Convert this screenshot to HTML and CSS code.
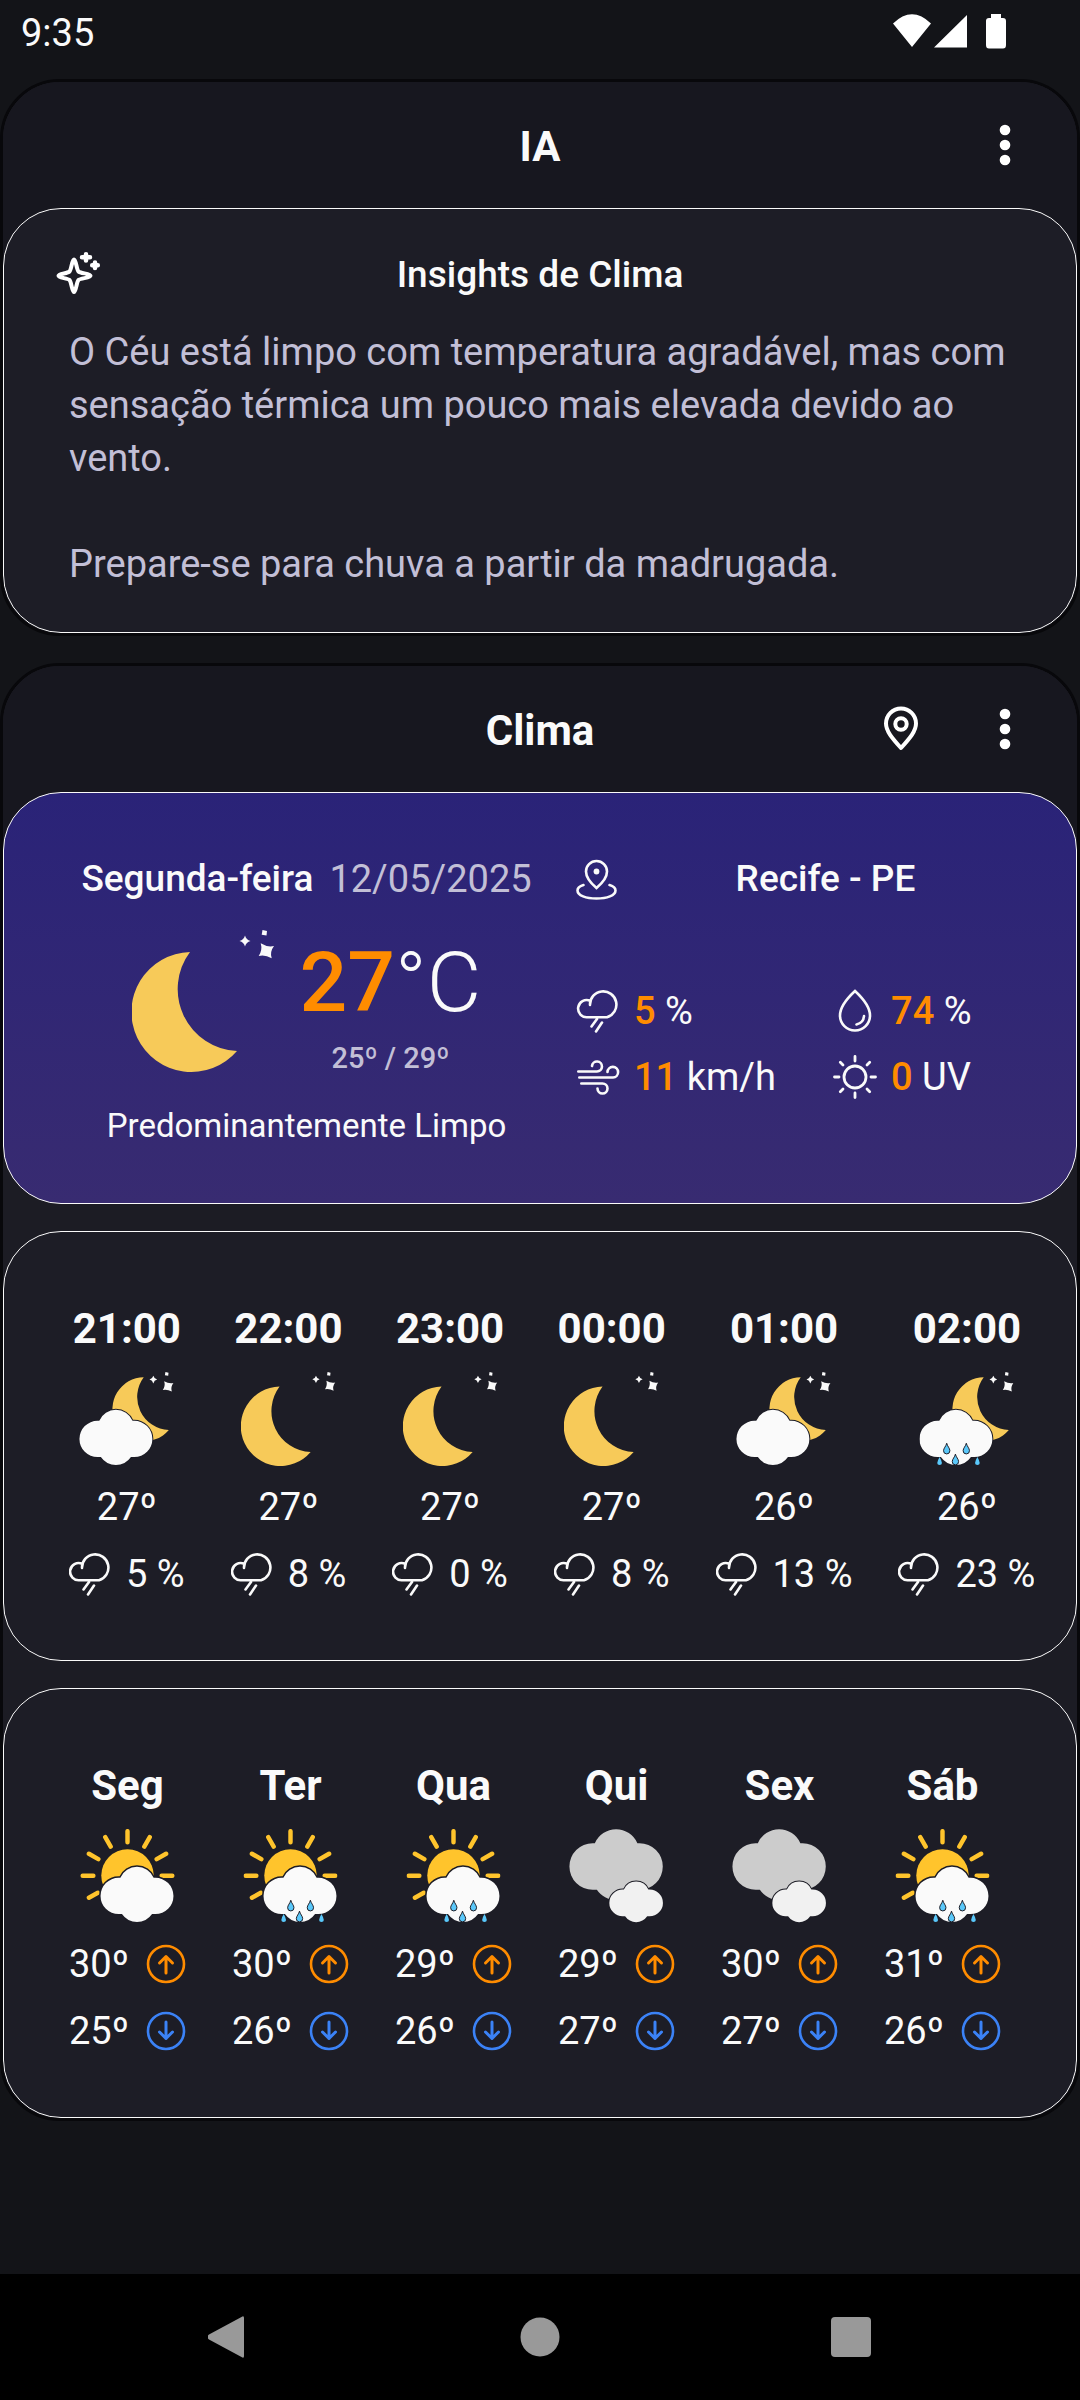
FILE: index.html
```html
<!DOCTYPE html>
<html lang="pt-BR">
<head>
<meta charset="utf-8">
<meta name="viewport" content="width=device-width, initial-scale=1">
<title>Clima</title>
<link rel="stylesheet" href="styles.css">
</head>
<body>
<svg class="sprite" aria-hidden="true">
  <defs>
    <path id="cloud-shape" d="M18.3 49.3H20A18.3 18.3 0 0 1 53.6 49.3H55.3A18.3 18.3 0 0 1 55.3 86H52A18.3 18.3 0 0 1 21.6 86H18.3A18.3 18.3 0 0 1 18.3 49.3Z"/>
    <path id="moon-shape" d="M58 22A60 60 0 1 0 105 121A62 62 0 0 1 58 22Z"/>
    <g id="stars-shape">
      <path d="M128.700 13.300Q135.500 17.500 142 16Q137.500 22 139.700 28.200Q133 24.500 126.700 26Q130.700 20 128.700 13.300Z"/>
      <path d="M113 5.500Q114.200 9.800 118.500 11Q114.200 12.200 113 16.500Q111.800 12.200 107.500 11Q111.800 9.800 113 5.500Z"/>
      <path d="M130.500 0L135 1L134.500 5.500L129.700 4.800Z"/>
    </g>
    <path id="drop-shape" d="M0 0C.6 3 3.200 5 3.200 7.600A3.200 3.200 0 0 1 -3.200 7.600C-3.200 5 -.6 3 0 0Z"/>
    <g id="rain-shape">
      <g stroke="#1d1d26" stroke-width="1">
        <use href="#drop-shape" x="27.500" y="72"/>
        <use href="#drop-shape" x="47.300" y="72"/>
        <use href="#drop-shape" x="36.300" y="83"/>
      </g>
      <path d="M20.300 86Q25 94 20.300 94Q15.600 94 20.300 86ZM58.500 86Q63.200 94 58.500 94Q53.800 94 58.500 86Z"/>
    </g>
  </defs>
  <symbol id="moon" viewBox="0 0 143 142">
    <use href="#moon-shape" fill="#f7ca59"/>
    <use href="#stars-shape" fill="#fafafa"/>
  </symbol>
  <symbol id="moon-cloud" viewBox="0 0 95 95">
    <use href="#moon-shape" fill="#f7ca59" transform="translate(33.600 -6.700) scale(.54)"/>
    <use href="#stars-shape" fill="#fafafa" transform="translate(-4.500 0) scale(.7)"/>
    <use href="#cloud-shape" fill="#fafafa" stroke="#1d1d26" stroke-width="2" paint-order="stroke"/>
  </symbol>
  <symbol id="moon-rain" viewBox="0 0 95 95">
    <use href="#moon-cloud" width="95" height="95"/>
    <use href="#rain-shape" fill="#5ac8fa"/>
  </symbol>
  <symbol id="sun-cloud" viewBox="0 0 95 95">
    <circle cx="47.500" cy="47" r="26.500" fill="#ffc42c"/>
    <path d="M47.500 2.200V13.500M70 8.200L64.500 17.800M86.500 25L77 30.500M92.800 47.300H82M2.200 47.300H13M8.500 25L18 30.500M25 8.200L30.500 17.800M8.500 69.500L17.500 64.500" stroke="#ffc42c" stroke-width="4.500" stroke-linecap="round"/>
    <use href="#cloud-shape" x="20.300" fill="#fafafa" stroke="#1d1d26" stroke-width="3" paint-order="stroke"/>
  </symbol>
  <symbol id="sun-rain" viewBox="0 0 95 95">
    <use href="#sun-cloud" width="95" height="95"/>
    <use href="#rain-shape" x="20.300" fill="#5ac8fa"/>
  </symbol>
  <symbol id="overcast" viewBox="0 0 95 95">
    <use href="#cloud-shape" fill="#ccc" transform="translate(0 -48.700) scale(1.280)"/>
    <use href="#cloud-shape" fill="#f1f1f1" stroke="#1d1d26" stroke-width="3" paint-order="stroke" transform="translate(40.300 25) scale(.735)"/>
  </symbol>
  <symbol id="rain" viewBox="0 0 42 44">
    <path d="M13 16A13.200 13.200 0 1 1 30 28.200H10.500A8.600 8.600 0 1 1 13 11.700M20 30L14.500 37.500M25 33.500L19 42.500" fill="none" stroke="#fafafa" stroke-width="2.600" stroke-linecap="round"/>
  </symbol>
  <symbol id="up" viewBox="0 0 40 40">
    <path d="M20 29V12.500M13.500 19L20 12.500L26.500 19" fill="none" stroke="currentColor" stroke-width="3" stroke-linecap="round" stroke-linejoin="round"/>
    <circle cx="20" cy="20" r="18" fill="none" stroke="currentColor" stroke-width="2.600"/>
  </symbol>
  <symbol id="dots" viewBox="0 0 12 42">
    <g fill="#fff"><circle cx="6" cy="6" r="5.300"/><circle cx="6" cy="21" r="5.300"/><circle cx="6" cy="36" r="5.300"/></g>
  </symbol>
</svg>

<div class="status-bar">
  <span>9:35</span>
  <span class="status-icons">
    <svg width="113" height="36" viewBox="0 0 113 36"><path d="M0 9.500Q19 -9 38 9.500L19 33Z M74 1V33.500H41Z M94 4H98V0H108V4H110Q113 4 113 7V31Q113 34.500 110 34.500H96Q93 34.500 93 31V7Q93 4 96 4Z" fill="#fff"/></svg>
  </span>
</div>

<main class="content">
  <section class="panel">
    <header class="panel-head">
      <h1 class="heading">IA</h1>
      <div class="actions">
        <button class="icon-button" aria-label="Mais opções"><svg width="12" height="42"><use href="#dots"/></svg></button>
      </div>
    </header>
    <article class="card insights">
      <div class="insights-head">
        <svg width="46" height="46" viewBox="0 2 46 46" fill="none"><path d="M18 9.500C20 9.500 20.500 19.500 22.500 21.500S34.500 23.500 34.500 25.800S24.500 28 22.500 30S20 42 18 42S15.500 32 13.500 30S2.500 28 2.500 25.800S11.500 23.500 13.500 21.500S16 9.500 18 9.500Z" stroke="#fff" stroke-width="4" stroke-linejoin="round"/><path d="M30 4.300V10.500M26 7.300H34M39 12.500V18M36.200 15.200H41.800" stroke="#fff" stroke-width="4.500" stroke-linecap="round"/></svg>
        <h2 class="label">Insights de Clima</h2>
      </div>
      <div class="insights-text">
        <p>O Céu está limpo com temperatura agradável, mas com<br>sensação térmica um pouco mais elevada devido ao<br>vento.</p>
        <p>Prepare-se para chuva a partir da madrugada.</p>
      </div>
    </article>
  </section>

  <section class="panel">
    <header class="panel-head">
      <h1 class="heading">Clima</h1>
      <div class="actions">
        <button class="icon-button" aria-label="Localização"><svg width="36" height="46" viewBox="0 0 36 46" fill="none" stroke="#fff" stroke-width="4"><path d="M18 42C9 32 3 25 3 17.500A15 15 0 0 1 33 17.500C33 25 27 32 18 42Z" stroke-linejoin="round"/><circle cx="18" cy="18" r="5.700"/></svg></button>
        <button class="icon-button" aria-label="Mais opções"><svg width="12" height="42"><use href="#dots"/></svg></button>
      </div>
    </header>

    <div class="cards">
      <article class="card current">
        <div class="today">
          <p class="date"><span class="label">Segunda-feira</span> <time class="muted" datetime="2025-05-12">12/05/2025</time></p>
          <div class="now">
            <svg width="143" height="142"><use href="#moon"/></svg>
            <div class="now-temp">
              <p class="degrees"><span class="hot">27</span>°C</p>
              <p class="range">25º / 29º</p>
            </div>
          </div>
          <p class="condition">Predominantemente Limpo</p>
        </div>
        <div class="details">
          <div class="place">
            <svg width="42" height="42" viewBox="0 -2 42 42" fill="none" stroke="#fafafa" stroke-width="2.600" stroke-linecap="round"><path d="M20.500 28C14 22.500 10 17 10 11.500A10.500 10.500 0 0 1 31 11.500C31 17 27 22.500 20.500 28Z"/><circle cx="20.500" cy="11.500" r="2.900" fill="#fafafa" stroke="none"/><path d="M7.500 25C4 26 1.500 28 1.500 30.500C1.500 35.500 10 38.500 20.500 38.500S39.500 35.500 39.500 30.500C39.500 28 37 26 33.500 25"/></svg>
            <h2 class="label">Recife - PE</h2>
          </div>
          <ul class="stats">
            <li><svg width="44" height="44"><use href="#rain"/></svg><span><b class="hot">5</b> %</span></li>
            <li><svg width="44" height="44" viewBox="0 0 44 44" fill="none" stroke="#fafafa" stroke-width="2.600" stroke-linecap="round"><path d="M22 2C15 8.500 7 17 7 26.500A15 15 0 0 0 37 26.500C37 17 29 8.500 22 2Z"/><path d="M31 27Q30.500 34 23.500 35.500"/></svg><span><b class="hot">74</b> %</span></li>
            <li><svg width="44" height="44" viewBox="0 0 44 44" fill="none" stroke="#fafafa" stroke-width="2.600" stroke-linecap="round"><path d="M2.300 16.500H21A5 5 0 1 0 16 11M3.300 22.500H37A5.300 5.300 0 1 0 31.500 17M5.300 28.500H26.500A5 5 0 1 1 21.500 33.500"/></svg><span><b class="hot">11</b> km/h</span></li>
            <li><svg width="44" height="44" viewBox="0 0 44 44" fill="none" stroke="#fafafa" stroke-width="2.800" stroke-linecap="round"><circle cx="22" cy="22" r="11"/><path d="M22 1.500V6M22 38V42.500M1.500 22H6M38 22H42.500M7.300 7.300L10 10M34 34L36.700 36.700M7.300 36.700L10 34M34 10L36.700 7.300"/></svg><span><b class="hot">0</b> UV</span></li>
          </ul>
        </div>
      </article>

      <article class="card forecast">
        <ul class="hours">
          <li class="slot"><h3 class="heading">21:00</h3><svg width="95" height="94"><use href="#moon-cloud"/></svg><p>27º</p><p class="rain"><svg width="42" height="44"><use href="#rain"/></svg>5 %</p></li>
          <li class="slot"><h3 class="heading">22:00</h3><svg width="95" height="94"><use href="#moon"/></svg><p>27º</p><p class="rain"><svg width="42" height="44"><use href="#rain"/></svg>8 %</p></li>
          <li class="slot"><h3 class="heading">23:00</h3><svg width="95" height="94"><use href="#moon"/></svg><p>27º</p><p class="rain"><svg width="42" height="44"><use href="#rain"/></svg>0 %</p></li>
          <li class="slot"><h3 class="heading">00:00</h3><svg width="95" height="94"><use href="#moon"/></svg><p>27º</p><p class="rain"><svg width="42" height="44"><use href="#rain"/></svg>8 %</p></li>
          <li class="slot"><h3 class="heading">01:00</h3><svg width="95" height="94"><use href="#moon-cloud"/></svg><p>26º</p><p class="rain"><svg width="42" height="44"><use href="#rain"/></svg>13 %</p></li>
          <li class="slot"><h3 class="heading">02:00</h3><svg width="95" height="94"><use href="#moon-rain"/></svg><p>26º</p><p class="rain"><svg width="42" height="44"><use href="#rain"/></svg>23 %</p></li>
        </ul>
      </article>

      <article class="card forecast">
        <ul class="days">
          <li class="slot"><h3 class="heading">Seg</h3><svg width="95" height="94"><use href="#sun-cloud"/></svg><p class="temp">30º<svg class="max" width="40" height="40"><use href="#up"/></svg></p><p class="temp">25º<svg class="min" width="40" height="40"><use href="#up"/></svg></p></li>
          <li class="slot"><h3 class="heading">Ter</h3><svg width="95" height="94"><use href="#sun-rain"/></svg><p class="temp">30º<svg class="max" width="40" height="40"><use href="#up"/></svg></p><p class="temp">26º<svg class="min" width="40" height="40"><use href="#up"/></svg></p></li>
          <li class="slot"><h3 class="heading">Qua</h3><svg width="95" height="94"><use href="#sun-rain"/></svg><p class="temp">29º<svg class="max" width="40" height="40"><use href="#up"/></svg></p><p class="temp">26º<svg class="min" width="40" height="40"><use href="#up"/></svg></p></li>
          <li class="slot"><h3 class="heading">Qui</h3><svg width="95" height="94"><use href="#overcast"/></svg><p class="temp">29º<svg class="max" width="40" height="40"><use href="#up"/></svg></p><p class="temp">27º<svg class="min" width="40" height="40"><use href="#up"/></svg></p></li>
          <li class="slot"><h3 class="heading">Sex</h3><svg width="95" height="94"><use href="#overcast"/></svg><p class="temp">30º<svg class="max" width="40" height="40"><use href="#up"/></svg></p><p class="temp">27º<svg class="min" width="40" height="40"><use href="#up"/></svg></p></li>
          <li class="slot"><h3 class="heading">Sáb</h3><svg width="95" height="94"><use href="#sun-rain"/></svg><p class="temp">31º<svg class="max" width="40" height="40"><use href="#up"/></svg></p><p class="temp">26º<svg class="min" width="40" height="40"><use href="#up"/></svg></p></li>
        </ul>
      </article>
    </div>
  </section>
</main>

<nav class="nav-bar">
  <button class="icon-button" aria-label="Voltar"><svg width="42" height="42" viewBox="3 0 42 42" fill="#999"><path d="M39 2Q39 -1 36.500 1L4 18.500Q1 21 4 23.500L36.500 41Q39 43 39 40Z"/></svg></button>
  <button class="icon-button" aria-label="Início"><svg width="42" height="42" viewBox="0 0 42 42" fill="#999"><circle cx="21" cy="21" r="19.500"/></svg></button>
  <button class="icon-button" aria-label="Recentes"><svg width="42" height="42" viewBox="0 0 42 42" fill="#999"><rect x="1" y="1" width="40" height="40" rx="4"/></svg></button>
</nav>
</body>
</html>
```
FILE: styles.css
```css
* {
  box-sizing: border-box;
  margin: 0;
  padding: 0;
}

body {
  display: flex;
  flex-direction: column;
  min-height: 100vh;
  background: #131418;
  color: #fafafa;
  font: 400 38px/52px Roboto, sans-serif;
}

ul {
  list-style: none;
}

svg {
  display: block;
  flex: none;
}

.sprite {
  position: absolute;
  width: 0;
  height: 0;
}

.status-bar {
  display: flex;
  justify-content: space-between;
  padding: 7px 74px 20px 21px;
}

.status-icons {
  padding-top: 7px;
}

.content {
  display: flex;
  flex-direction: column;
  gap: 27px;
}

.panel {
  border: 3px solid #08080b;
  border-radius: 60px;
  background: #1c1c24;
  overflow: hidden;
}

/* The header colour runs on behind the rounded top of the first card. */
.panel-head {
  display: grid;
  grid-template-columns: 1fr auto 1fr;
  align-items: center;
  height: 186px;
  padding: 0 66px 60px;
  margin-bottom: -60px;
  background: #17171f;
}

.heading {
  font-size: 42px;
  line-height: 56px;
  font-weight: 700;
}

.panel-head .heading {
  grid-column: 2;
  padding-top: 4px;
}

.actions {
  display: flex;
  justify-content: flex-end;
  align-items: center;
  gap: 80px;
}

.icon-button {
  border: 0;
  background: none;
}

.label {
  font-size: 37px;
  line-height: 52px;
  font-weight: 500;
}

.card {
  position: relative;
  border: 1px solid #fafafa;
  border-radius: 58px;
  background: #1d1d26;
}

.cards {
  display: grid;
  gap: 27px;
}

.insights {
  padding: 40px 52px 41px;
}

.insights-head {
  display: grid;
  grid-template-columns: 46px 1fr 46px;
  align-items: center;
  text-align: center;
}

.insights-text {
  display: grid;
  gap: 53px;
  padding: 25px 0 0 13px;
  color: #c2bfd6;
  line-height: 53px;
  white-space: nowrap;
}

.current {
  display: grid;
  grid-template-columns: 1fr 1fr;
  gap: 41px;
  padding: 60px 43px 55px 74px;
  background: linear-gradient(#2a2378, #382b71);
}

.today {
  display: flex;
  flex-direction: column;
  align-items: center;
}

.date {
  display: flex;
  gap: 16px;
}

.muted {
  color: #c2bfd6;
}

.now {
  display: flex;
  gap: 25px;
  margin: 25px 0 24px;
}

.now-temp {
  text-align: center;
}

.degrees {
  font-size: 84px;
  line-height: 106px;
  font-weight: 300;
}

.hot {
  color: #ff8c00;
  font-weight: 500;
}

.range {
  color: #c2bfd6;
  font-size: 29px;
  line-height: 44px;
  font-weight: 500;
}

.condition {
  font-size: 33px;
  line-height: 44px;
}

.details {
  display: flex;
  flex-direction: column;
  gap: 80px;
}

.place {
  display: grid;
  grid-template-columns: 42px 1fr;
  align-items: center;
  text-align: center;
}

.stats {
  display: grid;
  grid-template-columns: 9fr 7fr;
  row-gap: 14px;
}

.stats li {
  display: flex;
  align-items: center;
  gap: 14px;
}

.forecast {
  padding: 69px 42px 60px;
}

.hours {
  display: flex;
  gap: 46px;
  padding-left: 23px;
  overflow: hidden;
}

.days {
  display: grid;
  grid-template-columns: repeat(6, 1fr);
  padding-right: 10px;
}

.slot {
  display: flex;
  flex-direction: column;
  align-items: center;
  gap: 15px;
  flex: none;
}

.rain {
  display: flex;
  align-items: center;
  gap: 15px;
}

.temp {
  display: flex;
  align-items: center;
  gap: 17px;
}

.max {
  color: #ff8c00;
}

.min {
  color: #3b82f6;
  transform: rotate(180deg);
}

.nav-bar {
  display: flex;
  justify-content: space-between;
  margin-top: auto;
  padding: 42px 208px;
  background: #000;
}
```
